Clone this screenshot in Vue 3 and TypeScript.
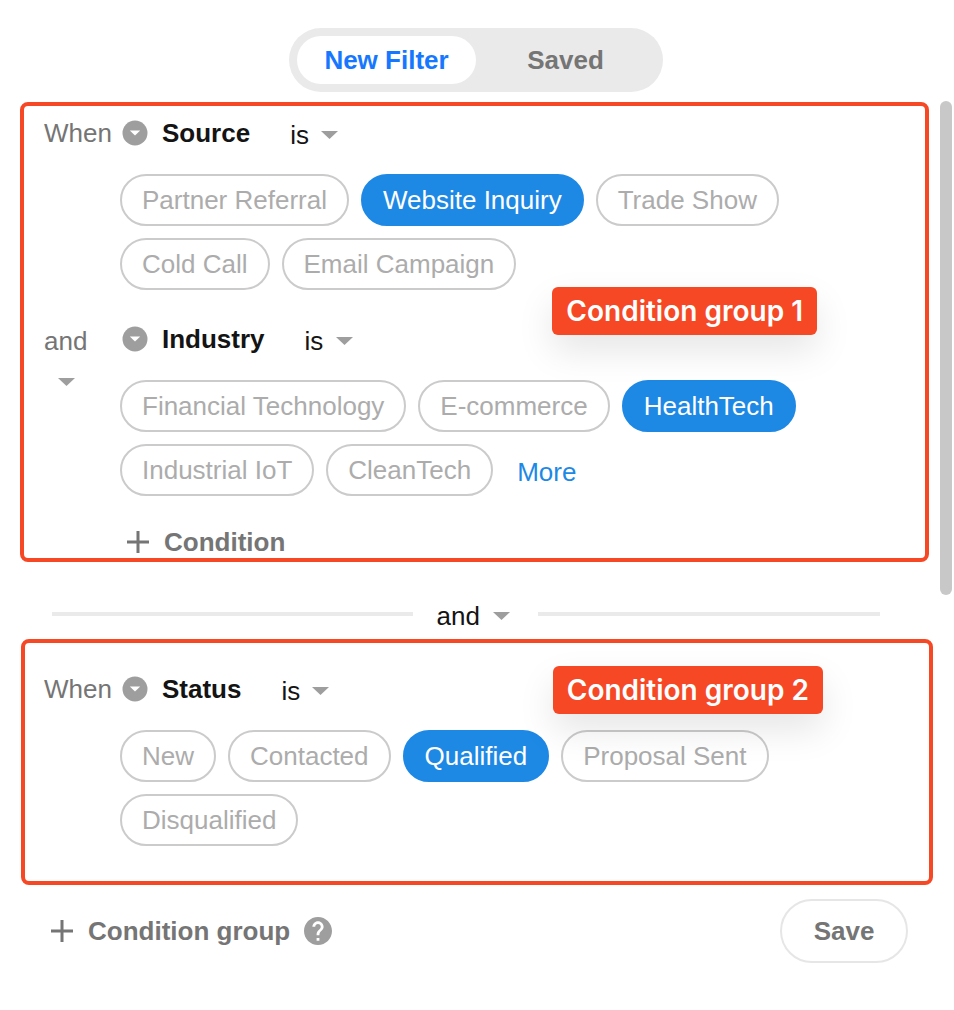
<script setup lang="ts">
import { reactive, ref } from 'vue'

interface Condition {
  joiner: string
  field: string
  operator: string
  options: string[]
  selected: string[]
  more?: boolean
}

interface Group {
  id: number
  title: string
  conditions: Condition[]
  canAdd: boolean
}

const tabs = ['New Filter', 'Saved']
const activeTab = ref('New Filter')

const groups = reactive<Group[]>([
  {
    id: 1,
    title: 'Condition group 1',
    canAdd: true,
    conditions: [
      {
        joiner: 'When',
        field: 'Source',
        operator: 'is',
        options: ['Partner Referral', 'Website Inquiry', 'Trade Show', 'Cold Call', 'Email Campaign'],
        selected: ['Website Inquiry'],
      },
      {
        joiner: 'and',
        field: 'Industry',
        operator: 'is',
        options: ['Financial Technology', 'E-commerce', 'HealthTech', 'Industrial IoT', 'CleanTech'],
        selected: ['HealthTech'],
        more: true,
      },
    ],
  },
  {
    id: 2,
    title: 'Condition group 2',
    canAdd: false,
    conditions: [
      {
        joiner: 'When',
        field: 'Status',
        operator: 'is',
        options: ['New', 'Contacted', 'Qualified', 'Proposal Sent', 'Disqualified'],
        selected: ['Qualified'],
      },
    ],
  },
])

function toggle(condition: Condition, option: string): void {
  const at = condition.selected.indexOf(option)
  if (at >= 0) condition.selected.splice(at, 1)
  else condition.selected.push(option)
}
</script>

<template>
  <main class="page">
    <nav class="tabs">
      <button
        v-for="tab in tabs"
        :key="tab"
        type="button"
        class="tab"
        :class="{ active: tab === activeTab }"
        @click="activeTab = tab"
      >{{ tab }}</button>
    </nav>

    <div class="body">
      <div class="groups">
        <template v-for="group in groups" :key="group.id">
          <div v-if="group.id > 1" class="divider">
            <span class="line line-left"></span>
            <label class="dropdown">
              <select aria-label="Group operator"><option>and</option></select>
              <svg class="caret" viewBox="0 0 17 8" aria-hidden="true"><path d="M0 0h17L8.500 8z" /></svg>
            </label>
            <span class="line line-right"></span>
          </div>

          <section class="group" :class="'group-' + group.id">
            <div v-for="condition in group.conditions" :key="condition.field" class="condition">
              <label v-if="condition.joiner === 'and'" class="dropdown joiner-menu">
                <select aria-label="Condition operator"><option>and</option></select>
                <svg class="caret" viewBox="0 0 17 8" aria-hidden="true"><path d="M0 0h17L8.500 8z" /></svg>
              </label>
              <span v-else class="joiner">{{ condition.joiner }}</span>

              <div class="detail">
                <div class="head">
                  <button type="button" class="field">
                    <svg class="disc" viewBox="0 0 26 26" aria-hidden="true">
                      <circle cx="13" cy="13" r="12.500" fill="#9e9e9e" />
                      <path d="M7.800 10.500h10.400L13 15.500z" fill="#fff" />
                    </svg>
                    {{ condition.field }}
                  </button>
                  <label class="dropdown">
                    <select :aria-label="condition.field + ' comparison'"><option>{{ condition.operator }}</option></select>
                    <svg class="caret" viewBox="0 0 17 8" aria-hidden="true"><path d="M0 0h17L8.500 8z" /></svg>
                  </label>
                </div>
                <div class="chips">
                  <button
                    v-for="option in condition.options"
                    :key="option"
                    type="button"
                    class="chip"
                    :class="{ on: condition.selected.includes(option) }"
                    :aria-pressed="condition.selected.includes(option)"
                    @click="toggle(condition, option)"
                  >{{ option }}</button>
                  <a v-if="condition.more" href="#" class="more" @click.prevent>More</a>
                </div>
              </div>
            </div>

            <button v-if="group.canAdd" type="button" class="add add-condition">
              <svg class="plus" viewBox="0 0 22 22" aria-hidden="true"><path d="M11 0v22M0 11h22" /></svg>
              Condition
            </button>
            <span class="tag">{{ group.title }}</span>
          </section>
        </template>
      </div>
      <div class="track"><div class="thumb"></div></div>
    </div>

    <footer class="footer">
      <button type="button" class="add">
        <svg class="plus" viewBox="0 0 22 22" aria-hidden="true"><path d="M11 0v22M0 11h22" /></svg>
        Condition group
      </button>
      <button type="button" class="help" aria-label="Help">
        <svg viewBox="2 2 20 20" aria-hidden="true">
          <path
            fill="#9e9e9e"
            d="M12 2C6.480 2 2 6.480 2 12s4.480 10 10 10 10-4.480 10-10S17.520 2 12 2zm1 17h-2v-2h2v2zm2.070-7.750l-.9.920C13.450 12.900 13 13.500 13 15h-2v-.5c0-1.100.45-2.100 1.170-2.830l1.240-1.260c.37-.36.59-.86.59-1.410 0-1.100-.9-2-2-2s-2 .9-2 2H8c0-2.210 1.790-4 4-4s4 1.790 4 4c0 .88-.36 1.680-.93 2.250z"
          />
        </svg>
      </button>
      <button type="button" class="save">Save</button>
    </footer>
  </main>
</template>

<style>
body {
  margin: 0;
  background: #fff;
}
</style>

<style scoped>
.page {
  box-sizing: border-box;
  min-height: 100vh;
  padding: 28px 2px 47px 0;
  background: #fff;
  color: #141414;
  font-family: "Helvetica Neue", "Liberation Sans", Arial, sans-serif;
  font-size: 26px;
  line-height: 32px;
}

button,
select {
  margin: 0;
  padding: 0;
  border: 0;
  background: none;
  color: inherit;
  font: inherit;
  cursor: pointer;
}

svg {
  display: block;
  flex: none;
}

.tabs {
  display: flex;
  width: fit-content;
  margin: 0 auto 9px;
  padding: 8px;
  border-radius: 32px;
  background: #eaeaea;
}

.tab {
  width: 179px;
  height: 48px;
  border-radius: 24px;
  color: #757575;
  font-weight: 700;
}

.tab.active {
  background: #fff;
  color: #1677ff;
}

.body {
  display: grid;
  grid-template-columns: minmax(0, 1fr) 12px;
}

.groups {
  padding-top: 1px;
}

.thumb {
  height: 63%;
  border-radius: 6px;
  background: #c8c8c8;
}

.group {
  position: relative;
  border: 4px solid #f64825;
  border-radius: 8px;
}

.group-1 {
  margin: 0 11px 0 20px;
  padding: 11px 20px 0;
}

.group-2 {
  margin: 0 7px 0 21px;
  padding: 30px 19px 35px;
}

.condition {
  display: grid;
  grid-template-columns: 76px minmax(0, 1fr);
}

.condition + .condition {
  margin-top: 33px;
}

.joiner {
  color: #757575;
}

.head {
  display: flex;
  gap: 40px;
  padding-left: 2px;
}

.field {
  display: flex;
  align-items: center;
  gap: 14px;
  font-weight: 700;
}

.disc {
  width: 26px;
  height: 26px;
}

.dropdown {
  display: flex;
  align-items: center;
  gap: 12px;
  padding-top: 4px;
  line-height: 28px;
}

.dropdown select {
  appearance: none;
  height: 28px;
  outline: none;
}

.caret {
  width: 17px;
  height: 8px;
  fill: #9e9e9e;
}

.joiner-menu {
  flex-direction: column;
  justify-self: start;
  align-self: start;
  gap: 23px;
  color: #757575;
}

.chips {
  display: flex;
  flex-wrap: wrap;
  gap: 12px;
  margin-top: 25px;
}

.chip {
  box-sizing: border-box;
  height: 52px;
  padding: 0 20px;
  border: 2px solid #cbcbcb;
  border-radius: 26px;
  color: #acacac;
  white-space: nowrap;
}

.chip.on {
  border-color: #1e88e5;
  background: #1e88e5;
  color: #fff;
}

.more {
  padding: 12px 12px 0;
  color: #1e88e5;
  text-decoration: none;
}

.add {
  display: flex;
  align-items: center;
  gap: 15px;
  color: #757575;
  font-weight: 700;
}

.add-condition {
  margin: 30px 0 0 83px;
}

.plus {
  width: 22px;
  height: 22px;
  fill: none;
  stroke: #757575;
  stroke-width: 3;
}

.tag {
  position: absolute;
  padding: 8px 14px;
  border-radius: 6px;
  background: #f64825;
  box-shadow: 0 16px 36px rgba(0, 0, 0, 0.1);
  color: #fff;
  font-family: Inter, "Liberation Sans", sans-serif;
  font-size: 28px;
  font-weight: 600;
  white-space: nowrap;
}

.group-1 .tag {
  top: 181px;
  right: 108px;
}

.group-2 .tag {
  top: 23px;
  right: 106px;
}

.divider {
  display: flex;
  align-items: center;
  margin: 36px 60px 9px 52px;
}

.divider .dropdown {
  margin: 0 28px 0 24px;
}

.line {
  height: 4px;
  background: #eaeaea;
}

.line-left {
  flex: 20 1 0;
}

.line-right {
  flex: 19 1 0;
}

.footer {
  display: flex;
  align-items: center;
  margin-top: 14px;
  padding: 0 44px 0 51px;
}

.help {
  width: 28px;
  height: 28px;
  margin-left: 14px;
}

.save {
  box-sizing: border-box;
  width: 128px;
  height: 64px;
  margin-left: auto;
  border: 2px solid #e6e6e6;
  border-radius: 32px;
  color: #757575;
  font-weight: 700;
}
</style>
